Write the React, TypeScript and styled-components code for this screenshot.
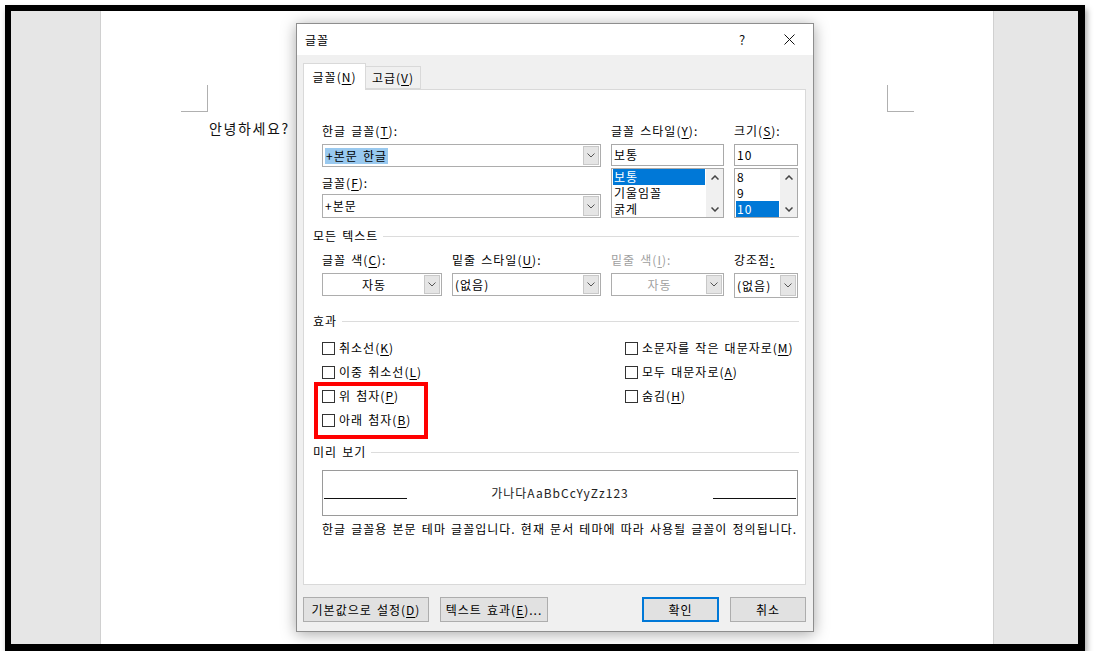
import styled, { createGlobalStyle } from "styled-components"

const GlobalStyle = createGlobalStyle`
  html, body {
    margin: 0;
    padding: 0;
    background: #fff;
  }

  body {
    font-family: "Noto Sans CJK KR", "Noto Sans", sans-serif;
    color: #000;
  }
`

type ChevronProps = {
  up?: boolean
  strong?: boolean
}

function Chevron({ up = false, strong = false }: ChevronProps) {
  return (
    <svg width="8" height="5" viewBox="0 0 8 5">
      <path
        d={up ? "M0.5 4.5L4 1L7.5 4.5" : "M0.5 0.5L4 4L7.5 0.5"}
        fill="none"
        stroke={strong ? "#444" : "#555"}
        strokeWidth={strong ? 1.5 : 1}
      />
    </svg>
  )
}

function CloseIcon() {
  return (
    <svg width="11" height="11" viewBox="0 0 11 11">
      <path d="M0.5 0.5L10.5 10.5M10.5 0.5L0.5 10.5" stroke="#111" strokeWidth="1" />
    </svg>
  )
}

type ComboProps = {
  width: number
  height?: number
  top?: number
  center?: boolean
  disabled?: boolean
  children: React.ReactNode
}

function Combo({ width, height = 23, top = 5, center, disabled, children }: ComboProps) {
  return (
    <ComboBox $width={width} $height={height} $top={top}>
      <ComboValue $center={center} $disabled={disabled}>
        {children}
      </ComboValue>
      <ComboButton>
        <Chevron />
      </ComboButton>
    </ComboBox>
  )
}

type ListProps = {
  items: string[]
  selected: string
}

function List({ items, selected }: ListProps) {
  return (
    <ListBox>
      <ListItems>
        {items.map(item => (
          <ListItem key={item} $selected={item === selected}>
            {item}
          </ListItem>
        ))}
      </ListItems>
      <ScrollBar>
        <Chevron up strong />
        <Chevron strong />
      </ScrollBar>
    </ListBox>
  )
}

const leftEffects = [
  ["취소선", "K"],
  ["이중 취소선", "L"],
]

const scriptEffects = [
  ["위 첨자", "P"],
  ["아래 첨자", "B"],
]

const rightEffects = [
  ["소문자를 작은 대문자로", "M"],
  ["모두 대문자로", "A"],
  ["숨김", "H"],
]

function CheckRow({ label, hotkey }: { label: string; hotkey: string }) {
  return (
    <CheckLine>
      <CheckBox />
      <span>
        {label}(<Key>{hotkey}</Key>)
      </span>
    </CheckLine>
  )
}

export default function App() {
  return (
    <>
      <GlobalStyle />
      <Frame>
        <Gutter />
        <Page>
          <CornerRow>
            <Corner $side="left" />
            <Corner $side="right" />
          </CornerRow>
          <PageText>안녕하세요?</PageText>
        </Page>
        <Gutter $right />

        <Dialog>
          <TitleBar>
            <Title>글꼴</Title>
            <TitleButtons>
              <TitleButton>?</TitleButton>
              <TitleButton>
                <CloseIcon />
              </TitleButton>
            </TitleButtons>
          </TitleBar>

          <DialogBody>
            <Tabs>
              <Tab $active>
                글꼴(<Key>N</Key>)
              </Tab>
              <Tab>
                고급(<Key>V</Key>)
              </Tab>
            </Tabs>

            <Panel>
              <FieldRow>
                <Column $width={279}>
                  <FieldLabel>
                    한글 글꼴(<Key>T</Key>):
                  </FieldLabel>
                  <Combo width={279}>
                    <Highlight>+본문 한글</Highlight>
                  </Combo>
                  <FieldLabel $top={8}>
                    글꼴(<Key>F</Key>):
                  </FieldLabel>
                  <Combo width={279} height={24} top={3}>
                    +본문
                  </Combo>
                </Column>
                <Column $width={113}>
                  <FieldLabel>
                    글꼴 스타일(<Key>Y</Key>):
                  </FieldLabel>
                  <TextBox>보통</TextBox>
                  <List items={["보통", "기울임꼴", "굵게"]} selected="보통" />
                </Column>
                <Column $width={64}>
                  <FieldLabel>
                    크기(<Key>S</Key>):
                  </FieldLabel>
                  <TextBox>10</TextBox>
                  <List items={["8", "9", "10"]} selected="10" />
                </Column>
              </FieldRow>

              <SectionTitle $top={10}>모든 텍스트</SectionTitle>
              <FieldRow $top={8}>
                <Column $width={120}>
                  <FieldLabel>
                    글꼴 색(<Key>C</Key>):
                  </FieldLabel>
                  <Combo width={120} center>
                    자동
                  </Combo>
                </Column>
                <Column $width={149}>
                  <FieldLabel>
                    밑줄 스타일(<Key>U</Key>):
                  </FieldLabel>
                  <Combo width={149}>(없음)</Combo>
                </Column>
                <Column $width={113}>
                  <FieldLabel $disabled>
                    밑줄 색(<Key>I</Key>):
                  </FieldLabel>
                  <Combo width={113} center disabled>
                    자동
                  </Combo>
                </Column>
                <Column $width={64}>
                  <FieldLabel>
                    강조점<Key>:</Key>
                  </FieldLabel>
                  <Combo width={64} height={25}>
                    (없음)
                  </Combo>
                </Column>
              </FieldRow>

              <SectionTitle $top={15}>효과</SectionTitle>
              <Effects>
                <EffectColumn>
                  {leftEffects.map(([label, hotkey]) => (
                    <CheckRow key={label} label={label} hotkey={hotkey} />
                  ))}
                  <Marked>
                    {scriptEffects.map(([label, hotkey]) => (
                      <CheckRow key={label} label={label} hotkey={hotkey} />
                    ))}
                  </Marked>
                </EffectColumn>
                <EffectColumn>
                  {rightEffects.map(([label, hotkey]) => (
                    <CheckRow key={label} label={label} hotkey={hotkey} />
                  ))}
                </EffectColumn>
              </Effects>

              <SectionTitle $top={12}>미리 보기</SectionTitle>
              <Preview>
                <PreviewRule />
                <PreviewText>가나다AaBbCcYyZz123</PreviewText>
                <PreviewRule />
              </Preview>
              <Description>
                한글 글꼴용 본문 테마 글꼴입니다. 현재 문서 테마에 따라 사용될 글꼴이 정의됩니다.
              </Description>
            </Panel>

            <ButtonRow>
              <ButtonGroup>
                <Button $width={126}>
                  기본값으로 설정(<Key>D</Key>)
                </Button>
                <Button $width={108}>
                  텍스트 효과(<Key>E</Key>)...
                </Button>
              </ButtonGroup>
              <ButtonGroup>
                <Button $width={77} $primary>
                  확인
                </Button>
                <Button $width={76}>취소</Button>
              </ButtonGroup>
            </ButtonRow>
          </DialogBody>
        </Dialog>
      </Frame>
    </>
  )
}

const Frame = styled.div`
  position: relative;
  box-sizing: border-box;
  margin: 5px 0 0 5px;
  width: 1080px;
  height: 646px;
  border: solid #000;
  border-width: 6px 7px 7px 6px;
  display: flex;
  background: #fff;
  box-shadow: 2px 4px 6px rgba(0, 0, 0, 0.35);
`

const Gutter = styled.div<{ $right?: boolean }>`
  flex: none;
  width: ${p => (p.$right ? 85 : 90)}px;
  box-sizing: border-box;
  background: #e6e6e6;
  border: 0 solid #d0d0d0;
  border-width: ${p => (p.$right ? "0 0 0 1px" : "0 1px 0 0")};
`

const Page = styled.div`
  flex: 1;
  padding: 74px 79px 0 80px;
  background: #fff;
`

const CornerRow = styled.div`
  display: flex;
  justify-content: space-between;
`

const Corner = styled.div<{ $side: "left" | "right" }>`
  width: 26px;
  height: 26px;
  border-bottom: 1px solid #b0b0b0;
  ${p => (p.$side === "left" ? "border-right" : "border-left")}: 1px solid #b0b0b0;
`

const PageText = styled.div`
  margin: 7px 0 0 28px;
  font-size: 14px;
  line-height: 18px;
  letter-spacing: 1.6px;
  color: #111;
`

const Dialog = styled.div`
  position: absolute;
  left: 285px;
  top: 12px;
  width: 518px;
  height: 609px;
  box-sizing: border-box;
  border: 1px solid #8e8e8e;
  background: #f0f0f0;
  box-shadow: 0 2px 14px rgba(0, 0, 0, 0.35);
  display: flex;
  flex-direction: column;
  font-size: 12px;
  line-height: 16px;
  letter-spacing: 1px;
  word-spacing: 1.5px;
`

const TitleBar = styled.div`
  height: 31px;
  flex: none;
  background: #fff;
  display: flex;
  align-items: center;
  justify-content: space-between;
  padding-left: 8px;
`

const Title = styled.span`
  font-size: 12px;
  color: #000;
`

const TitleButtons = styled.div`
  display: flex;
  align-self: stretch;
`

const TitleButton = styled.div`
  width: 47px;
  display: flex;
  align-items: center;
  justify-content: center;
  font-size: 13px;
  color: #111;
`

const DialogBody = styled.div`
  flex: 1;
  padding: 8px 7px 0 6px;
  display: flex;
  flex-direction: column;
`

const Tabs = styled.div`
  display: flex;
  align-items: flex-end;
  height: 26px;
  position: relative;
  z-index: 1;
`

const Tab = styled.div<{ $active?: boolean }>`
  box-sizing: border-box;
  width: ${p => (p.$active ? 63 : 55)}px;
  height: ${p => (p.$active ? 27 : 23)}px;
  margin-bottom: ${p => (p.$active ? -1 : 0)}px;
  padding-top: ${p => (p.$active ? 5 : 3)}px;
  text-align: center;
  border: 1px solid #d9d9d9;
  border-bottom: ${p => (p.$active ? "none" : "1px solid #d9d9d9")};
  border-left: ${p => (p.$active ? "1px solid #d9d9d9" : "none")};
  background: ${p => (p.$active ? "#fff" : "#f0f0f0")};
  font-size: 12px;
  line-height: 16px;
`

const Panel = styled.div`
  box-sizing: border-box;
  width: 503px;
  height: 496px;
  flex: none;
  padding: 33px 6px 0 9px;
  border: 1px solid #d9d9d9;
  background: #fff;
`

const Key = styled.u`
  text-underline-offset: 2px;
`

const FieldRow = styled.div<{ $top?: number }>`
  display: flex;
  align-items: flex-start;
  gap: 10px;
  margin: ${p => p.$top ?? 0}px 0 0 9px;
`

const Column = styled.div<{ $width: number }>`
  width: ${p => p.$width}px;
  display: flex;
  flex-direction: column;
`

const FieldLabel = styled.div<{ $top?: number; $disabled?: boolean }>`
  margin-top: ${p => p.$top ?? 0}px;
  height: 16px;
  white-space: nowrap;
  color: ${p => (p.$disabled ? "#a0a0a0" : "#000")};
`

const ComboBox = styled.div<{ $width: number; $height: number; $top: number }>`
  box-sizing: border-box;
  width: ${p => p.$width}px;
  height: ${p => p.$height}px;
  margin-top: ${p => p.$top}px;
  border: 1px solid #adadad;
  background: #fff;
  display: flex;
`

const ComboValue = styled.div<{ $center?: boolean; $disabled?: boolean }>`
  flex: 1;
  min-width: 0;
  display: flex;
  align-items: center;
  justify-content: ${p => (p.$center ? "center" : "flex-start")};
  padding-left: 2px;
  white-space: nowrap;
  overflow: hidden;
  color: ${p => (p.$disabled ? "#a0a0a0" : "#000")};
`

const Highlight = styled.span`
  background: #99c9ef;
  padding: 0 1px;
`

const ComboButton = styled.div`
  flex: none;
  width: 16px;
  margin: 1px;
  box-sizing: border-box;
  border: 1px solid #c8c8c8;
  background: #e5e5e5;
  display: flex;
  align-items: center;
  justify-content: center;
`

const TextBox = styled.div`
  box-sizing: border-box;
  height: 22px;
  margin-top: 5px;
  padding: 2px 2px;
  border: 1px solid #a9a9a9;
  background: #fff;
`

const ListBox = styled.div`
  box-sizing: border-box;
  height: 50px;
  margin-top: 2px;
  border: 1px solid #a9a9a9;
  background: #fff;
  display: flex;
`

const ListItems = styled.div`
  flex: 1;
  min-width: 0;
  padding: 0 1px;
`

const ListItem = styled.div<{ $selected?: boolean }>`
  height: 16px;
  padding-left: 1px;
  white-space: nowrap;
  background: ${p => (p.$selected ? "#0078d7" : "transparent")};
  color: ${p => (p.$selected ? "#fff" : "#000")};
`

const ScrollBar = styled.div`
  flex: none;
  width: 17px;
  background: #f0f0f0;
  display: flex;
  flex-direction: column;
  justify-content: space-between;
  align-items: center;
  padding: 6px 0 5px;
`

const SectionTitle = styled.div<{ $top: number }>`
  margin-top: ${p => p.$top}px;
  height: 16px;
  display: flex;
  align-items: center;
  gap: 5px;
  color: #000;

  &::after {
    content: "";
    flex: 1;
    height: 1px;
    background: #dcdcdc;
  }
`

const Effects = styled.div`
  display: grid;
  grid-template-columns: 303px 1fr;
  margin: 7px 0 0 9px;
`

const EffectColumn = styled.div`
  display: flex;
  flex-direction: column;
`

const Marked = styled.div`
  position: relative;

  &::before {
    content: "";
    position: absolute;
    left: -8px;
    top: -2px;
    width: 114px;
    height: 57px;
    box-sizing: border-box;
    border: 4px solid #f00;
  }
`

const CheckLine = styled.div`
  height: 24px;
  display: flex;
  align-items: center;
  gap: 4px;
  white-space: nowrap;
`

const CheckBox = styled.span`
  width: 13px;
  height: 13px;
  box-sizing: border-box;
  border: 1px solid #333;
  background: #fff;
`

const Preview = styled.div`
  box-sizing: border-box;
  width: 476px;
  height: 46px;
  margin: 10px 0 0 9px;
  padding: 0 1px;
  border: 1px solid #9a9a9a;
  display: flex;
  align-items: center;
`

const PreviewRule = styled.div`
  width: 83px;
  height: 1px;
  margin-top: 11px;
  background: #111;
`

const PreviewText = styled.div`
  flex: 1;
  text-align: center;
  color: #222;
`

const Description = styled.div`
  margin: 5px 0 0 9px;
  white-space: nowrap;
`

const ButtonRow = styled.div`
  margin-top: 12px;
  display: flex;
  justify-content: space-between;
`

const ButtonGroup = styled.div`
  display: flex;
  gap: 11px;
`

const Button = styled.div<{ $width: number; $primary?: boolean }>`
  box-sizing: border-box;
  width: ${p => p.$width}px;
  height: 25px;
  display: flex;
  align-items: center;
  justify-content: center;
  white-space: nowrap;
  border: 1px solid ${p => (p.$primary ? "#0078d7" : "#adadad")};
  box-shadow: ${p => (p.$primary ? "inset 0 0 0 1px #0078d7" : "none")};
  background: #e1e1e1;
  color: #000;
`
